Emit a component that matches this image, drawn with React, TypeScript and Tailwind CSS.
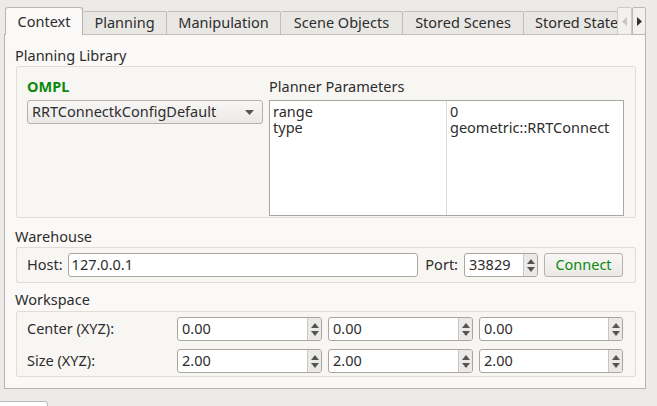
import React from "react";

const font = { fontFamily: '"Noto Sans", "Open Sans", sans-serif' };

function Spin({ value, w }: { value: string; w: string }) {
  return (
    <div className={`flex h-[24px] ${w} rounded-[3px] border border-[#a9a6a2] bg-white overflow-hidden`}>
      <div className="flex-1 flex items-center pl-[4px] text-[14.5px] text-[#2d2d2d]">{value}</div>
      <div className="w-[14px] flex flex-col items-center justify-center gap-[3px] border-l border-[#c9c6c2] bg-[#ebe9e6]">
        <svg width="8" height="5" viewBox="0 0 8 5"><path d="M0 5 L4 0 L8 5 Z" fill="#555" /></svg>
        <svg width="8" height="5" viewBox="0 0 8 5"><path d="M0 0 L4 5 L8 0 Z" fill="#555" /></svg>
      </div>
    </div>
  );
}

function Tab({ label, w, active }: { label: string; w: string; active?: boolean }) {
  if (active)
    return (
      <div className={`${w} shrink-0 h-[28px] flex items-center justify-center rounded-t-[3px] border border-b-0 border-[#b7b4b0] bg-[#fbf9f7] text-[14.5px] text-[#2d2d2d] relative z-10`}>
        {label}
      </div>
    );
  return (
    <div className={`${w} shrink-0 h-[24px] flex items-center justify-center whitespace-nowrap border border-l-0 border-[#c2bfbb] bg-[#e9e7e4] text-[14.5px] text-[#2d2d2d] rounded-t-[2px]`}>
      {label}
    </div>
  );
}

export default function App() {
  return (
    <div style={font} className="w-[657px] h-[406px] bg-[#edebe8] overflow-hidden relative">
      <div className="pt-[7px] pl-[4px] w-[646px]">
        {/* tab bar */}
        <div className="flex items-end h-[28px] pl-[1px]">
          <div className="flex items-end flex-1 overflow-hidden">
            <Tab label="Context" w="w-[78px]" active />
            <Tab label="Planning" w="w-[84px]" />
            <Tab label="Manipulation" w="w-[114px]" />
            <Tab label="Scene Objects" w="w-[122px]" />
            <Tab label="Stored Scenes" w="w-[121px]" />
            <div className="w-[120px] shrink-0 h-[24px] flex items-center pl-[11px] whitespace-nowrap border border-l-0 border-[#c2bfbb] bg-[#e9e7e4] text-[14.5px] text-[#2d2d2d]">
              Stored States
            </div>
          </div>
          <div className="flex h-[28px] self-start">
            <div className="w-[15px] h-[28px] flex items-center justify-center border border-[#cfccc8] bg-[#f3f1ef] rounded-[2px]">
              <svg width="5" height="9" viewBox="0 0 5 9"><path d="M5 0 L0 4.5 L5 9 Z" fill="#c8c6c3" /></svg>
            </div>
            <div className="w-[14px] h-[28px] flex items-center justify-center border border-[#bcb9b5] bg-[#f3f1ef] rounded-[2px]">
              <svg width="5" height="9" viewBox="0 0 5 9"><path d="M0 0 L5 4.5 L0 9 Z" fill="#333" /></svg>
            </div>
          </div>
        </div>
        {/* pane */}
        <div className="-mt-px h-[355px] border border-[#b7b4b0] bg-[#fbf9f7] pl-[11px] pr-[9px] text-[14.5px] text-[#2d2d2d]">
          <div className="h-[18px] mt-[11px] leading-[18px] -ml-[1px]">Planning Library</div>
          <div className="mt-[2px] h-[152px] border border-[#e0ddd9] rounded-[2px] bg-[#f8f6f3] pl-[10px] pr-[11px] pt-[10px] grid grid-cols-[236px_1fr] gap-x-[6px]">
            <div className="flex flex-col">
              <div className="h-[18px] leading-[18px] font-bold text-[#0b8a0b]">OMPL</div>
              <div className="mt-[5px] h-[24px] flex items-center justify-between rounded-[3px] border border-[#b5b2ae] bg-gradient-to-b from-[#f8f7f6] to-[#ebe9e6] pl-[4px] pr-[8px]">
                <span>RRTConnectkConfigDefault</span>
                <svg width="9" height="5" viewBox="0 0 9 5"><path d="M0 0 L9 0 L4.5 5 Z" fill="#555" /></svg>
              </div>
            </div>
            <div className="flex flex-col">
              <div className="h-[18px] leading-[18px]">Planner Parameters</div>
              <div className="mt-[5px] h-[116px] border border-[#aaa7a3] bg-white flex">
                <div className="w-[177px] border-r border-[#dcdad7] pl-[3px] pt-[2px] leading-[16px]">
                  <div>range</div>
                  <div>type</div>
                </div>
                <div className="flex-1 pl-[3px] pt-[2px] leading-[16px]">
                  <div>0</div>
                  <div>geometric::RRTConnect</div>
                </div>
              </div>
            </div>
          </div>
          <div className="h-[18px] mt-[9px] leading-[18px] -ml-[1px]">Warehouse</div>
          <div className="mt-[2px] h-[36px] border border-[#e0ddd9] rounded-[2px] bg-[#f8f6f3] pl-[10px] pr-[12px] flex items-center">
            <span>Host:</span>
            <div className="ml-[5px] flex-1 h-[24px] flex items-center rounded-[3px] border border-[#aaa7a3] bg-white pl-[3px]">127.0.0.1</div>
            <span className="ml-[7px]">Port:</span>
            <div className="ml-[6px]">
              <Spin value="33829" w="w-[74px]" />
            </div>
            <div className="ml-[6px] w-[79px] h-[24px] flex items-center justify-center rounded-[3px] border border-[#b5b2ae] bg-gradient-to-b from-[#f8f7f6] to-[#ebe9e6] text-[#0b8a0b]">
              Connect
            </div>
          </div>
          <div className="h-[18px] mt-[7px] leading-[18px] -ml-[1px]">Workspace</div>
          <div className="mt-[3px] h-[66px] border border-[#e0ddd9] rounded-[2px] bg-[#f8f6f3] pl-[10px] pr-[12px] pt-[5px] flex flex-col gap-[8px]">
            <div className="flex items-center">
              <span className="w-[151px]">Center (XYZ):</span>
              <div className="flex gap-[6px]">
                <Spin value="0.00" w="w-[145px]" />
                <Spin value="0.00" w="w-[145px]" />
                <Spin value="0.00" w="w-[144px]" />
              </div>
            </div>
            <div className="flex items-center">
              <span className="w-[151px]">Size (XYZ):</span>
              <div className="flex gap-[6px]">
                <Spin value="2.00" w="w-[145px]" />
                <Spin value="2.00" w="w-[145px]" />
                <Spin value="2.00" w="w-[144px]" />
              </div>
            </div>
          </div>
        </div>
      </div>
      <div className="mt-[12px] w-[50px] h-[10px] bg-white border border-[#bcb9b5] rounded-[3px] -ml-[2px]" />
    </div>
  );
}
